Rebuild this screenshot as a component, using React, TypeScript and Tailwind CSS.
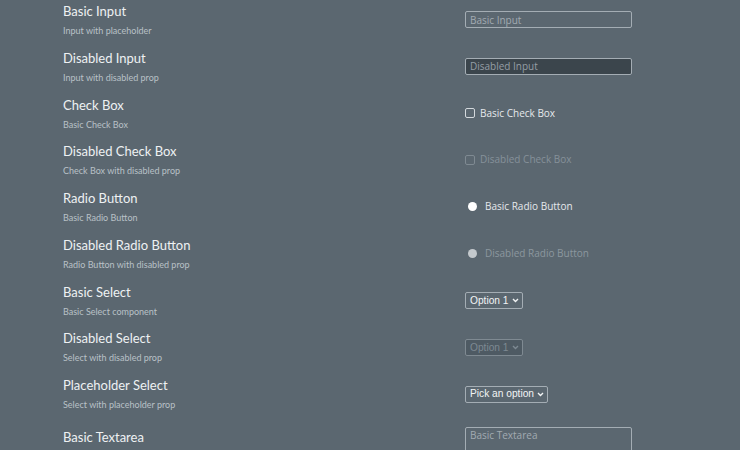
import React from "react";

const title = "text-[13px] leading-[20px] text-[#eef1f3] font-['Lato',sans-serif]";
const sub = "text-[9px] leading-[14px] mt-[3px] text-[#b9c1c7] font-['Lato',sans-serif]";
const ctl = "font-['Open_Sans',sans-serif] text-[10px]";

function Row({ t, s, children, cls = "" }: { t: string; s: string; children: React.ReactNode; cls?: string }) {
  return (
    <div className={"flex items-center " + cls}>
      <div className="w-[402px] shrink-0">
        <div className={title}>{t}</div>
        <div className={sub}>{s}</div>
      </div>
      <div className="flex items-center">{children}</div>
    </div>
  );
}

function Chevron({ c }: { c: string }) {
  return (
    <svg width="7" height="5" viewBox="0 0 7 5" className="ml-[3px]">
      <path d="M1 1 L3.5 3.5 L6 1" fill="none" stroke={c} strokeWidth="1.4" />
    </svg>
  );
}

function Sel({ text, disabled }: { text: string; disabled?: boolean }) {
  return (
    <div
      className={
        "h-[17px] mt-[1px] flex items-center pl-[4px] pr-[3px] rounded-[2px] border font-['Liberation_Sans',Arial,sans-serif] text-[10.2px] " +
        (disabled ? "border-[#7f8a92] bg-[#4e5a63] text-[#7d8992]" : "border-[#a4adb4] text-[#f2f4f5]")
      }
    >
      <span>{text}</span>
      <Chevron c={disabled ? "#7d8992" : "#f2f4f5"} />
    </div>
  );
}

export default function App() {
  return (
    <div className="w-[740px] h-[450px] overflow-hidden bg-[#5b6770]">
      <div className="pl-[63px] pt-[1px] flex flex-col gap-[9.75px]">
        <Row t="Basic Input" s="Input with placeholder">
          <div className={"w-[167px] h-[17px] border border-[#a4adb4] rounded-[2px] flex items-center pt-[1px] px-[4px] text-[#a2abb2] " + ctl}>
            Basic Input
          </div>
        </Row>
        <Row t="Disabled Input" s="Input with disabled prop">
          <div className={"w-[167px] h-[17px] border border-[#a4adb4] bg-[#3b454c] rounded-[2px] flex items-center pt-[1px] px-[4px] text-[#959ea5] " + ctl}>
            Disabled Input
          </div>
        </Row>
        <Row t="Check Box" s="Basic Check Box">
          <span className="w-[10px] h-[10px] border border-[#d4d9dd] rounded-[2px] inline-block" />
          <span className={"ml-[5px] text-[#e6e9ec] " + ctl}>Basic Check Box</span>
        </Row>
        <Row t="Disabled Check Box" s="Check Box with disabled prop">
          <span className="w-[10px] h-[10px] border border-[#7f8a92] rounded-[2px] inline-block" />
          <span className={"ml-[5px] text-[#86919a] " + ctl}>Disabled Check Box</span>
        </Row>
        <Row t="Radio Button" s="Basic Radio Button">
          <span className="ml-[3px] w-[9px] h-[9px] rounded-full bg-white inline-block" />
          <span className={"ml-[8px] text-[#e6e9ec] " + ctl}>Basic Radio Button</span>
        </Row>
        <Row t="Disabled Radio Button" s="Radio Button with disabled prop">
          <span className="ml-[3px] w-[9px] h-[9px] rounded-full bg-[#c4c9cd] inline-block" />
          <span className={"ml-[8px] text-[#8c979f] " + ctl}>Disabled Radio Button</span>
        </Row>
        <Row t="Basic Select" s="Basic Select component">
          <Sel text="Option 1" />
        </Row>
        <Row t="Disabled Select" s="Select with disabled prop">
          <Sel text="Option 1" disabled />
        </Row>
        <Row t="Placeholder Select" s="Select with placeholder prop">
          <Sel text="Pick an option" />
        </Row>
        <div className="flex items-start mt-[5px]">
          <div className="w-[402px] shrink-0">
            <div className={title}>Basic Textarea</div>
            <div className={sub}>Textarea with placeholder</div>
          </div>
          <div className={"w-[167px] h-[40px] border border-[#a4adb4] rounded-[2px] px-[4px] leading-[15px] text-[#a2abb2] " + ctl}>
            Basic Textarea
          </div>
        </div>
      </div>
    </div>
  );
}
